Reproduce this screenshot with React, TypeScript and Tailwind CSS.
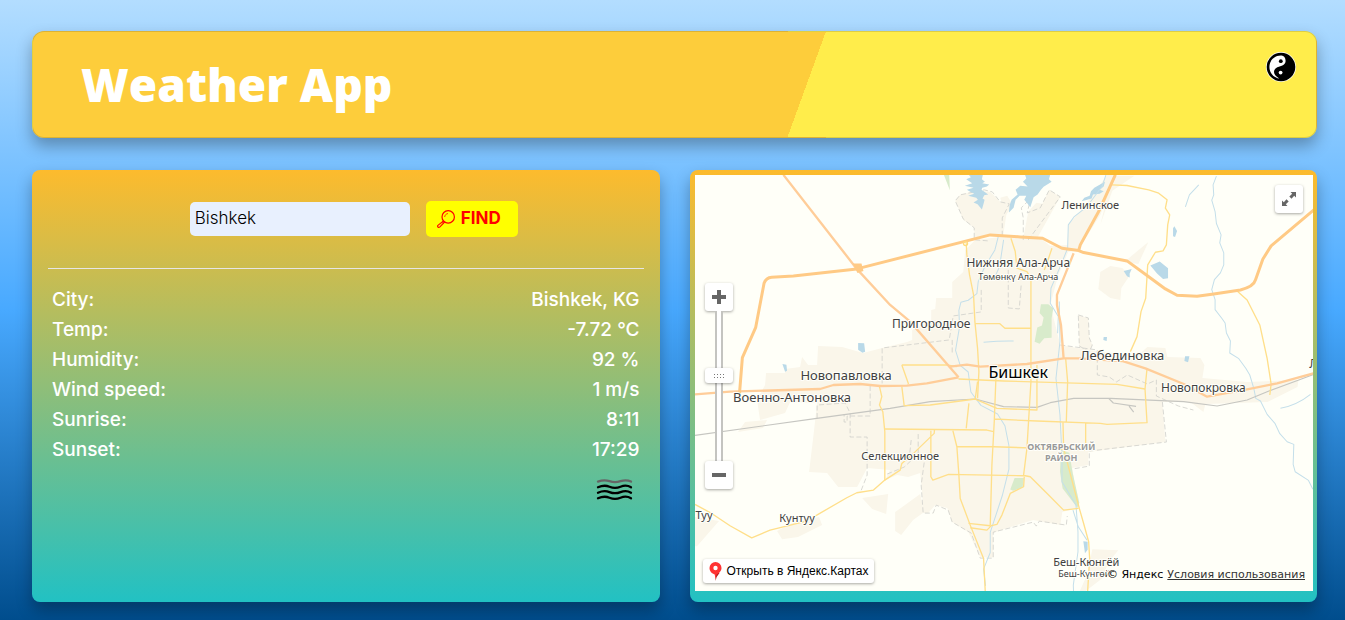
import { useState } from "react";

type Reading = { label: string; value: string };

const readings: Reading[] = [
  { label: "City:", value: "Bishkek, KG" },
  { label: "Temp:", value: "-7.72 °C" },
  { label: "Humidity:", value: "92 %" },
  { label: "Wind speed:", value: "1 m/s" },
  { label: "Sunrise:", value: "8:11" },
  { label: "Sunset:", value: "17:29" },
];

function YinYang() {
  return (
    <svg viewBox="0 0 30 30" className="size-full" aria-hidden="true">
      <circle cx="15" cy="15" r="15" fill="#fff" />
      <circle cx="15" cy="15" r="14.3" fill="#000" />
      <path
        d="M15.5 3.6C8.8 3.2 3.4 8.4 3.4 15c0 5.600 4.200 10.600 9.800 11.400C9.600 24.500 8 22.300 8 19.800c0-2.900 2.200-4.600 5.600-5.400 4.200-.9 6-2.900 6-5.600 0-2.900-1.700-5-4.100-5.200z"
        fill="#fff"
      />
      <circle cx="14.800" cy="9.200" r="1.900" fill="#000" />
      <circle cx="14.600" cy="20.600" r="1.900" fill="#fff" />
    </svg>
  );
}

function Magnifier() {
  return (
    <svg viewBox="0 0 18 18" className="size-[18px]" fill="none" stroke="#f00" strokeLinecap="round" strokeLinejoin="round" aria-hidden="true">
      <circle cx="11.200" cy="6.900" r="6.200" strokeWidth="1.200" />
      <path d="M7.700 6.600c.2-1.500 1.300-2.700 2.900-3" strokeWidth=".8" />
      <path d="M6.500 11 .9 15.400c-.9 1.200.6 2.600 1.800 1.700L7.600 12" strokeWidth="1.100" />
      <path d="M5.300 11.900l1.400 1.300" strokeWidth=".8" />
    </svg>
  );
}

function Mist() {
  return (
    <svg viewBox="0 0 50 50" className="ml-auto size-[50px]" fill="none" stroke="#000" strokeWidth="2.300" strokeLinecap="round" role="img" aria-label="Mist">
      <path stroke="#666" d="M8 16.600c5-1.800 7.500-1.800 11.500-.4 4 1.400 7 1.400 11 0 4-1.400 7-1.400 10.500.4" />
      <path d="M8 22.300c5-2.200 7.500-2.200 11.500-.6 4 1.600 7 1.600 11 0 4-1.600 7-1.600 10.500.6" />
      <path d="M8 27.700c5-2.200 7.500-2.200 11.500-.6 4 1.600 7 1.600 11 0 4-1.600 7-1.600 10.500.6" />
      <path d="M8 33.300c5-2.200 7.500-2.200 11.500-.6 4 1.600 7 1.600 11 0 4-1.600 7-1.600 10.500.6" />
    </svg>
  );
}

function MapDrawing() {
  return (
    <svg
      viewBox="15 30 1854 1248"
      preserveAspectRatio="xMidYMid slice"
      className="absolute inset-0 size-full"
      fill="none"
      strokeLinejoin="round"
      role="img"
      aria-label="Карта Бишкека"
    >
      <rect x="0" y="0" width="1900" height="1300" fill="#fffff8" />

      {/* built-up areas */}
      <g transform="scale(3) translate(-690 -165)" fill="#faf6ea">
        <path d="M963 272L952 282V298H936L935 309L931 310V320L912 330V340L907 342L882 348L863 353L842 347L818 346L817 365H808L802 357L800 367L785 369V373H766L765 385L757 400L760 420L785 413L790 402L817 403L814 430L809 472L827 473L838 487H857L867 468L890 470L885 480L897 475L908 477L920 473L922 493L923 513H928L935 505L947 508L952 522L968 532L980 557H993V533L1010 527L1033 520L1060 525L1062 512L1078 508L1072 468L1088 465V452L1165 442L1162 402L1190 402L1203 412L1205 404L1267 402L1297 387L1298 380L1247 382L1202 378L1204 365L1200 358L1167 357L1165 348L1147 347L1138 355L1100 352L1060 345L1050 305L1058 275L1068 252L1078 250L1100 215L1117 175H1107L1083 208L1068 225L1067 245L1050 246L1040 238L1000 237L975 240L965 250Z" />
        <path d="M955 201L960 195L975 191L990 192L1000 202L1008 203L1003 235L980 236L974 240V228L963 220Z" />
        <path d="M1023 238L1028 212L1036 203L1042 204L1049 190L1060 197L1037 238Z" />
        <path d="M1000 198l7-2 6 10-8 10z" />
        <path d="M1100 272l10-6 12 2 7 8-8 12-1 12-10-2-12-9zM1124 262l24-20-10 22zM1112 176h22l-22 15-12 34z" />
        <path d="M1078 315l10 3 1 20 3 7-3 7-10-4z" />
        <path d="M738 432l7-10 22-2-4 8zM695 517l24 4-22 25h-2zM777 531l15-8 27-6 3 8-24 12-16 2zM862 498l26-4-2 20-14-5zM895 512l25-18 4 18-11 8-12 15-6-4zM1092 549l26 1-10 12-6 16-18 14h-5l8-18z" />
      </g>

      {/* district borders */}
      <g transform="scale(3) translate(-690 -165)" stroke="#cfcfca" strokeWidth=".8" strokeDasharray="5 2.500">
        <path d="M974 238V228L963 219L955 201L960 195L984 190L992 192L1000 202L1009 204L1002 218V236M1023 240V218l-2-10 8-8M1028 240L1060 197L1049 190L1040 208L1027 213L1030 200M975 240l13 1" />
        <path d="M1008 270v38l11 1 2-25M981 290v22l-28 4-4 24-67 8v36M952 340v14M1078 315l10 3 1 20 3 7-3 7-10-6zM1060 345l37 5v25l12 2 7 5 11-7 20 9 9-4v16l22 10 15 4M1162 402l4 40-77 9v15l-17 3" />
        <path d="M817 418V405l28-2 5 10v24h17v38l-7 18M870 386v30h-23v6h-3v-8M918 434v20l-14 13-17 7M911 440l-2 19M925 455l-4 30 2 28h10l3-8 12 5 4 12 19 11 9 25h13v-26l40-10 3 4 3-5 27 4 1-9" />
      </g>

      {/* parks */}
      <g fill="#d8ebcb">
        <path d="M122 418l22 0 15 12-5 30 0 58-22 2-14 16-15-6 8-42 14-6 5-24-12-14z" transform="translate(930 0)" />
        <path d="M182 210l25 8 10 60 20 90-6 15-44-58-8-50zM43 294h28l-4 28-28 10-9-4z" transform="translate(930 645)" />
        <path d="M761 30h16l2 46z" />
      </g>

      {/* water */}
      <g fill="#b9d9e8">
        <path
          transform="translate(750 21)"
          d="M85 8L128 8L125 22L134 30L126 34L147 38L140 44L126 48L124 54L144 68L132 70L127 80L133 84L130 96L125 113L112 97L100 92L113 84L108 78L84 72L102 66L90 60L80 54L100 48L74 42L96 34L78 22L92 16ZM254 8H330L326 22L334 30L310 45L302 54L292 68L280 76L270 106L262 96L252 84L258 72L238 72L226 84L220 108L206 122L208 100L214 84L232 68L226 54L240 42L262 44L248 30L258 20ZM424 88L432 78L448 72L452 58L462 48L494 30L490 44L478 54L490 58L478 66L458 68L454 80Z"
        />
        <path transform="translate(930 0)" d="M450 302l28-12 25 20 0 30-15 2-18-16zM370 318l24-6-6 14 0 12-8-4zM518 190l4-6 8 14-6 18-6-2zM310 516l10 0-1 12-10-3zM554 574l13 0-4 18-11-4z" />
        <path d="M504 534l18 1 3 25-8 3-13-9zM277 597l12 2 2 18-6 3zM1179 1128l13 2v24l-8 10z" />
      </g>
      <g stroke="#c4dfea" strokeWidth="3">
        <path d="M1247 30l-12 35-45 60-38 30-18 25-2 70-20 50-30 70-2 45 24 40-2 50M924 215l-10 40-30 50-20 45-4 36-26 20-22 6-6 24 2 50-12 70 14 45 24 20 8 60 30 40 50 26 22 35 12 60 0 70-20 80-36 110 0 60-20 50 6 50M940 225l-12 80-18 40M1107 410l2 120-12 110 12 110 6 120 0 80 42 70 6 80 0 60-14 100 2 60M1148 1035l16 50 26 40" />
        <path d="M1578 34l-10 26 2 30-6 16 10 34 4 36 14 34-4 24 12 30 0 36-10 24-18 20-8 30 10 30 0 30 20 26 10 14 4 30 12 24-2 36 26 16 22 30 12 20 12 40 6 30 14 8 20 40 24 28 14 30 22 24 20 8-2 60 6 22 40 26 12 24 22 28" />
        <path d="M1525 60l-28 30-12 36M880 532q50-5 90-4M1770 730q50-10 90-42" />
      </g>

      {/* railway */}
      <g stroke="#c6c6c1" strokeWidth="3.500">
        <path d="M15 811L380 760L600 730L720 710L855 702L940 725L1040 727L1080 713L1150 700H1260L1480 710L1580 723L1670 705L1730 680L1825 645L1869 628" />
        <path d="M1255 700l14 14 68 10M1316 723l14 18" />
      </g>

      {/* local roads */}
      <g stroke="#ffdf8a" strokeWidth="4">
        <path d="M828 235L830 270L838 330L850 390L854 470L862 550L866 620L862 700" />
        <path d="M855 476H928L944 490H1022M962 220L975 260L980 310L1010 320L1022 340L1022 650L1010 850L1000 930M1085 250L1068 300L1062 315" />
        <path d="M635 600H770L800 605M635 600L655 657M805 642L940 648L1280 658L1364 672M568 665L575 695L568 720L578 740L584 800V945L550 975L500 983L470 998L380 1050L340 1070L240 1095L185 1118L120 1082L65 1045L15 1018" />
        <path d="M635 665L642 722L720 720L855 702L862 650M855 702L920 730L1040 735V600M836 715L828 790M584 792L890 795L910 800M733 792L732 805L670 865L635 895L630 915L584 945M722 797V935L728 945L775 928L1005 932L1020 935L1075 990L1120 1035L1165 1030" />
        <path d="M788 797L800 845L806 930L810 1000L840 1080L880 1180L885 1278M800 845H910L1060 850M917 640L912 770L905 900L900 1080M912 762L1040 768L1230 775L1250 778L1370 773L1364 672L1370 610M1126 580L1132 650L1128 770M1118 770L1120 850L1150 965L1167 1030L1180 1075L1195 1130L1198 1180L1192 1278M1186 775V855L1060 850" />
        <path d="M835 1075L900 1082L920 1078L935 1050L960 985L1000 965L1002 935M840 1088L890 1095L905 1080" />
        <path d="M1265 60L1310 62L1375 75L1405 85L1430 105L1425 130L1438 150L1432 180L1428 240L1418 258L1395 262L1372 300L1366 400L1352 440L1340 515L1320 560M1640 378L1670 405L1708 480L1730 580L1742 657L1738 690" />
      </g>

      {/* regional roads */}
      <g stroke="#ffcd99" strokeWidth="7">
        <path d="M280 30L440 235L500 312L600 420L660 470L805 637M15 688L120 680L390 672L430 660L510 657L570 663L650 662L710 655L805 637" />
        <path d="M780 605L830 599L870 605L1010 597L1120 580H1165L1295 588L1365 610L1480 657L1550 695L1670 673L1760 655L1869 625M1150 265L1100 390V420L1112 480L1120 580" />
      </g>

      {/* motorways */}
      <g stroke="#ffca85" strokeWidth="9">
        <path d="M148 690L157 578L197 487L222 355Q228 338 245 337L310 333L500 312L900 210L990 216L1057 220L1115 250L1165 257L1180 263L1310 288L1370 332L1425 372L1460 391L1520 394L1570 387L1650 375Q1690 365 1695 345L1717 283L1742 243L1870 135" />
        <path d="M1275 30L1225 140L1170 240L1165 257" />
      </g>
      <path d="M488 296l26 0 6 22-18 6z" fill="#ffca85" />
      <circle cx="826" cy="236" r="6" stroke="#ffdc80" strokeWidth="4" />

      {/* place names */}
      <g
        transform="scale(3) translate(-690 -165)"
        className="font-['Noto_Sans',sans-serif]"
        fill="#414141"
        stroke="#fffffa"
        strokeWidth="2"
        paintOrder="stroke"
        textAnchor="middle"
        fontSize="13"
      >
        <text x="1018" y="378" fontSize="16" fill="#000">Бишкек</text>
        <text x="1018" y="267" fontSize="12">Нижняя Ала-Арча</text>
        <text x="1018" y="280" fontSize="9">Төмөнкү Ала-Арча</text>
        <text x="931" y="328" fontSize="12">Пригородное</text>
        <text x="846" y="380">Новопавловка</text>
        <text x="792" y="402">Военно-Антоновка</text>
        <text x="1122" y="360">Лебединовка</text>
        <text x="1203" y="392" fontSize="12">Новопокровка</text>
        <text x="1090" y="209" fontSize="11">Ленинское</text>
        <text x="900" y="460" fontSize="11">Селекционное</text>
        <text x="797" y="522" fontSize="11">Кунтуу</text>
        <text x="704" y="519" fontSize="11">Туу</text>
        <text x="1086" y="566" fontSize="11">Беш-Кюнгёй</text>
        <text x="1084" y="577" fontSize="9">Беш-Күнгөй</text>
        <text x="1313" y="368" fontSize="12">Л</text>
        <g fill="#999" fontSize="9" fontWeight="700">
          <text x="1061" y="450">ОКТЯБРЬСКИЙ</text>
          <text x="1061" y="461">РАЙОН</text>
        </g>
      </g>
    </svg>
  );
}

const mapButton =
  "flex size-7 items-center justify-center rounded-[3px] bg-white text-[#666] shadow-[0_1px_3px_rgba(0,0,0,0.35)]";

function CityMap() {
  const [zoom, setZoom] = useState(11);
  return (
    <div className="relative h-[416px] overflow-hidden">
      <MapDrawing />

      <button type="button" aria-label="Полный экран" className={`${mapButton} absolute top-2.5 right-2.5`}>
        <svg viewBox="0 0 14 14" className="size-3.5" fill="currentColor" aria-hidden="true">
          <path d="M8.500 0H14v5.500L12.200 3.800 9.500 6.700 7.300 4.500 10.200 1.800zM5.500 14H0V8.500l1.800 1.700 2.700-2.900 2.200 2.200L3.800 12.200z" />
        </svg>
      </button>

      <div className="absolute top-[108px] left-2.5 flex flex-col items-center">
        <button type="button" aria-label="Приблизить" className={mapButton} onClick={() => setZoom(Math.min(19, zoom + 1))}>
          <svg viewBox="0 0 14 14" className="size-3.5" fill="currentColor" aria-hidden="true">
            <path d="M5 0h4v5h5v4H9v5H5V9H0V5h5z" />
          </svg>
        </button>
        <input
          type="range"
          min={0}
          max={19}
          value={zoom}
          onChange={(e) => setZoom(Number(e.target.value))}
          aria-label="Масштаб"
          className="h-[150px] w-7 appearance-none bg-[linear-gradient(90deg,#c4c4c0_0_2px,#fff_2px_6px,#c4c4c0_6px_8px)] bg-[length:8px_100%] bg-center bg-no-repeat [direction:rtl] [writing-mode:vertical-lr] [&::-webkit-slider-thumb]:h-[15px] [&::-webkit-slider-thumb]:w-7 [&::-webkit-slider-thumb]:appearance-none [&::-webkit-slider-thumb]:rounded-[3px] [&::-webkit-slider-thumb]:bg-white [&::-webkit-slider-thumb]:[background-image:repeating-linear-gradient(90deg,#777_0_1px,transparent_1px_3px),repeating-linear-gradient(90deg,#777_0_1px,transparent_1px_3px)] [&::-webkit-slider-thumb]:[background-position:center_6px,center_9px] [&::-webkit-slider-thumb]:[background-repeat:no-repeat] [&::-webkit-slider-thumb]:[background-size:10px_1px,10px_1px] [&::-webkit-slider-thumb]:shadow-[0_1px_3px_rgba(0,0,0,0.35)]"
        />
        <button type="button" aria-label="Отдалить" className={mapButton} onClick={() => setZoom(Math.max(0, zoom - 1))}>
          <svg viewBox="0 0 14 14" className="size-3.5" fill="currentColor" aria-hidden="true">
            <path d="M0 5h14v4H0z" />
          </svg>
        </button>
      </div>

      <a
        href="#maps"
        className="absolute bottom-2 left-2 flex h-6 items-center gap-1 rounded-[3px] bg-white px-1.5 font-['Liberation_Sans',sans-serif] text-xs text-black shadow-[0_1px_3px_rgba(0,0,0,0.35)]"
      >
        <svg viewBox="0 0 14 20" className="h-5 w-3.5" aria-hidden="true">
          <path d="M6.500 20V12h4q-3 3-4 8z" fill="#b51f1f" />
          <path d="M6.500 1a6 6 0 0 1 6 6c0 3.500-3 5.500-5 6.500l-1 4.500-.8-4.600C3 12.500.5 10.500.5 7a6 6 0 0 1 6-6z" fill="#f33" />
          <circle cx="6.500" cy="7" r="2.200" fill="#fff" />
        </svg>
        Открыть в Яндекс.Картах
      </a>

      <p className="absolute right-2 bottom-2 flex gap-1 bg-[#fffff8]/70 font-['DejaVu_Sans',sans-serif] text-[11px] leading-4 text-black">
        <span>© Яндекс</span>
        <a href="#terms" className="text-[#333] underline">
          Условия использования
        </a>
      </p>
    </div>
  );
}

export default function App() {
  const [city, setCity] = useState("Bishkek");
  return (
    <div className="flex min-h-screen flex-col gap-8 bg-[linear-gradient(#b3ddff,#48a9ff_50%,#004d8d)] pt-[31px] pr-7 pb-[18px] pl-8 font-[Inter,sans-serif]">
      <header className="flex items-start justify-between rounded-xl border border-black/[0.125] bg-[linear-gradient(110deg,#fdcd3b_60%,#ffed4b_60%)] py-5 pr-5 pl-12 shadow-[0_8px_16px_rgba(0,0,0,0.3)]">
        <h1 className="font-['Open_Sans',sans-serif] text-[46px] leading-[65px] font-extrabold text-white">Weather App</h1>
        <button type="button" aria-label="Switch theme" className="size-[30px] rounded-full">
          <YinYang />
        </button>
      </header>

      <main className="grid flex-1 grid-cols-1 gap-[30px] md:grid-cols-2">
        <section className="rounded-lg bg-[linear-gradient(#fdbb2d,#22c1c3)] p-4 shadow-[0_8px_16px_rgba(0,0,0,0.3)]">
          <form className="flex items-center justify-center gap-4 pt-[15px] pb-[31px] pl-4" onSubmit={(e) => e.preventDefault()}>
            <input
              type="text"
              aria-label="City"
              value={city}
              onChange={(e) => setCity(e.target.value)}
              className="h-[34px] w-[220px] rounded-[5px] bg-[#e8f0fe] px-[5px] pb-0.5 text-[17px] font-light text-black"
            />
            <button type="submit" className="flex h-9 w-[92px] items-center gap-1.5 rounded-[5px] bg-[#ff0] pl-[11px] text-[17px] font-bold text-[#f00]">
              <Magnifier />
              FIND
            </button>
          </form>
          <hr className="border-[#e6e6e6]" />
          <table className="mt-4 w-full text-[19px] leading-[30px] text-white">
            <tbody>
              {readings.map((r) => (
                <tr key={r.label}>
                  <th scope="row" className="px-1 text-left font-medium">
                    {r.label}
                  </th>
                  <td className="px-1 text-right font-medium">{r.value}</td>
                </tr>
              ))}
            </tbody>
          </table>
          <div className="pr-1">
            <Mist />
          </div>
        </section>

        <section className="rounded-lg bg-[linear-gradient(#fdbb2d,#22c1c3)] pt-[5px] pr-1 pb-[11px] pl-[5px] shadow-[0_8px_16px_rgba(0,0,0,0.3)]">
          <CityMap />
        </section>
      </main>
    </div>
  );
}
